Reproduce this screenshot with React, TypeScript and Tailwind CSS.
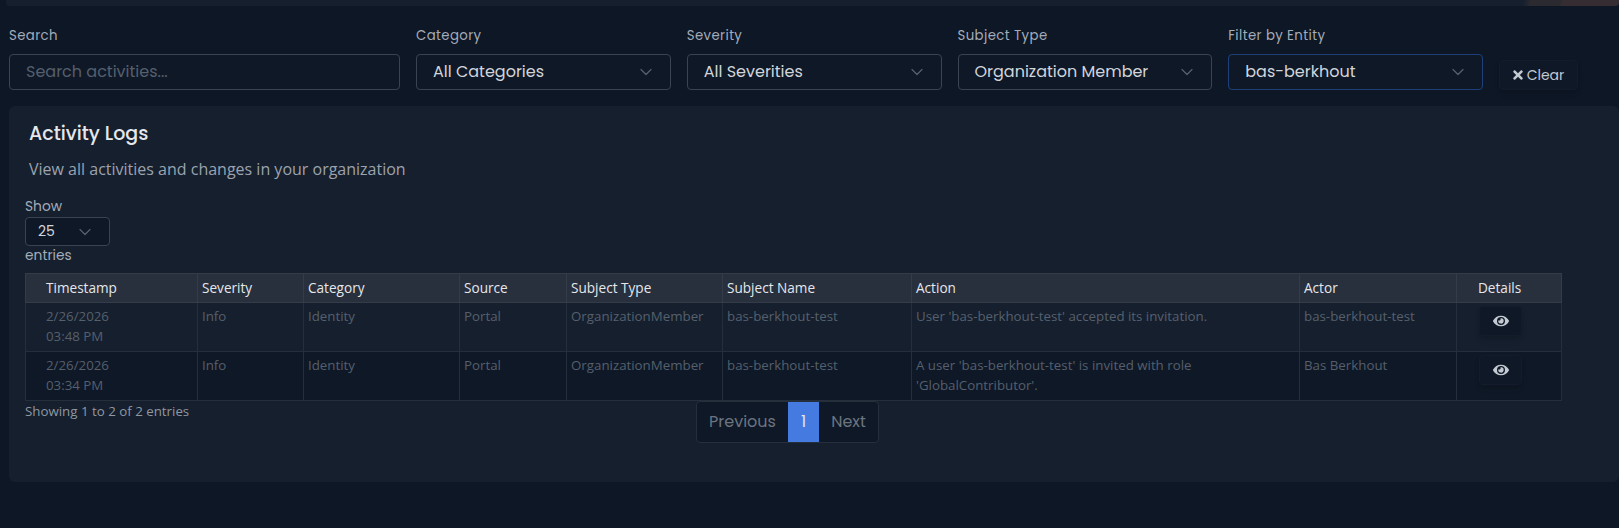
import { ChevronDown } from 'lucide-react';
import { FaEye, FaTimes } from 'react-icons/fa';

const poppins = "font-['Poppins','Inter','Liberation_Sans',sans-serif]";

const rows = [
  {
    date: '2/26/2026',
    time: '03:48 PM',
    action: "User 'bas-berkhout-test' accepted its invitation.",
    actor: 'bas-berkhout-test',
    tint: 'bg-[#151f2d]',
  },
  {
    date: '2/26/2026',
    time: '03:34 PM',
    action: "A user 'bas-berkhout-test' is invited with role 'GlobalContributor'.",
    actor: 'Bas Berkhout',
    tint: 'bg-[#0f1826]',
  },
];

const headers = ['Severity', 'Category', 'Source', 'Subject Type', 'Subject Name', 'Action', 'Actor'];

function FilterSelect({ label, value, active }: { label: string; value: string; active?: boolean }) {
  return (
    <div className="w-[254.75px] shrink-0">
      <div className="h-[29px] pt-[1px] text-[13.3px] leading-[20px] tracking-[0.4px] text-[#a3acb9]">{label}</div>
      <div
        className={`flex h-[36px] items-center justify-between rounded border bg-[#0f1826] pl-[16px] pr-[14px] text-[16px] text-[#d1d5db] ${
          active ? 'border-[#1e3f78]' : 'border-[#3a4350]'
        }`}
      >
        <span>{value}</span>
        <ChevronDown className="h-5 w-5 text-[#565f6c]" strokeWidth={1.5} />
      </div>
    </div>
  );
}

export default function App() {
  return (
    <div className={`h-[528px] w-[1619px] overflow-hidden bg-[#0e1726] ${poppins}`}>
      {/* Top bar */}
      <div className="ml-[6px] h-[6px] rounded-b bg-[linear-gradient(100deg,#151f2d_94%,#2b2a30_94.5%,#2b2a30_96.3%,#352d31_96.5%)]" />

      {/* Filters */}
      <div className="flex items-end gap-[16px] pl-[9px] pt-[19px]">
        <div className="w-[391px] shrink-0">
          <div className="h-[29px] pt-[1px] text-[13.3px] leading-[20px] tracking-[0.4px] text-[#a3acb9]">Search</div>
          <input
            placeholder="Search activities..."
            className="h-[36px] w-full rounded border border-[#3a4350] bg-[#0f1826] px-[16px] pb-[2px] text-[16px] text-[#d1d5db] placeholder-[#555f6d] outline-none"
          />
        </div>
        <FilterSelect label="Category" value="All Categories" />
        <FilterSelect label="Severity" value="All Severities" />
        <FilterSelect label="Subject Type" value="Organization Member" />
        <FilterSelect label="Filter by Entity" value="bas-berkhout" active />
        <button className="flex h-[30px] w-[79px] items-center justify-center gap-1 rounded border border-[#131c2a] bg-[#0f1826] text-[14px] text-[#c3c9d2] shadow-md">
          <FaTimes className="h-[14px] w-[10px]" />
          Clear
        </button>
      </div>

      {/* Card */}
      <div className="ml-[9px] mt-[16px] h-[376px] rounded-md bg-[#151f2d] pl-[16px] pr-[56px]">
        <h2 className="pl-[4px] pt-[17px] text-[19px] leading-[22px] font-medium text-[#e5e7eb]">Activity Logs</h2>
        <p className="pl-[4px] pt-[13px] font-['Open_Sans'] text-[16px] leading-[22px] text-[#9ca3af]">
          View all activities and changes in your organization
        </p>
        <div className="pt-[17px] text-[13.8px] leading-[20px] text-[#a3acb9]">Show</div>
        <div className="flex h-[29px] w-[85px] items-center justify-between rounded border border-[#3a4350] bg-[#0f1826] pl-[12px] pr-[14px] text-[14px] text-[#d1d5db]">
          25
          <ChevronDown className="h-5 w-5 text-[#565f6c]" strokeWidth={1.5} />
        </div>
        <div className="text-[13.8px] leading-[20px] text-[#a3acb9]">entries</div>

        <table className="mt-[7px] w-[1536px] table-fixed border-collapse font-['Open_Sans'] text-[13.3px] leading-[20px]">
          <colgroup>
            <col className="w-[172px]" />
            <col className="w-[106px]" />
            <col className="w-[156px]" />
            <col className="w-[107px]" />
            <col className="w-[156px]" />
            <col className="w-[189px]" />
            <col className="w-[388px]" />
            <col className="w-[157px]" />
            <col className="w-[105px]" />
          </colgroup>
          <thead>
            <tr className="h-[29px] bg-[#282f3d] text-left text-[13.6px] text-[#e5e7eb]">
              <th className="border border-[#343c4a] pl-[20px] font-medium">Timestamp</th>
              {headers.map((h) => (
                <th key={h} className="border border-[#343c4a] pl-[4px] font-medium">{h}</th>
              ))}
              <th className="border border-[#343c4a] pl-[21px] font-medium">Details</th>
            </tr>
          </thead>
          <tbody className="text-[#555f6d]">
            {rows.map((r) => (
              <tr key={r.time} className={`h-[49px] align-top ${r.tint}`}>
                <td className="border border-[#252e3b] pl-[20px] pt-[3px]">
                  {r.date}
                  <br />
                  {r.time}
                </td>
                <td className="border border-[#252e3b] pl-[4px] pt-[3px]">Info</td>
                <td className="border border-[#252e3b] pl-[4px] pt-[3px]">Identity</td>
                <td className="border border-[#252e3b] pl-[4px] pt-[3px]">Portal</td>
                <td className="border border-[#252e3b] pl-[4px] pt-[3px]">OrganizationMember</td>
                <td className="border border-[#252e3b] pl-[4px] pt-[3px]">bas-berkhout-test</td>
                <td className="border border-[#252e3b] pl-[4px] pt-[3px]">{r.action}</td>
                <td className="border border-[#252e3b] pl-[4px] pt-[3px]">{r.actor}</td>
                <td className="border border-[#252e3b] pl-[22px] pt-[3px]">
                  <button className="flex h-[30px] w-[43px] items-center justify-center rounded border border-[#131c2a] bg-[#0f1826] text-[#c3c9d2] shadow-md">
                    <FaEye className="h-4 w-4" />
                  </button>
                </td>
              </tr>
            ))}
          </tbody>
        </table>

        <div className="flex">
          <div className="w-[671px] font-['Open_Sans'] text-[13.3px] leading-[20px] text-[#8f97a3]">Showing 1 to 2 of 2 entries</div>
          <div className="flex h-[42px] items-stretch overflow-hidden rounded border border-[#252e3b] bg-[#0f1826] text-[16px] text-[#6b7480]">
            <span className="flex w-[91px] items-center justify-center">Previous</span>
            <span className="flex w-[31px] items-center justify-center bg-[#457ae0] text-[#e5e7eb]">1</span>
            <span className="flex w-[59px] items-center justify-center">Next</span>
          </div>
        </div>
      </div>
    </div>
  );
}
